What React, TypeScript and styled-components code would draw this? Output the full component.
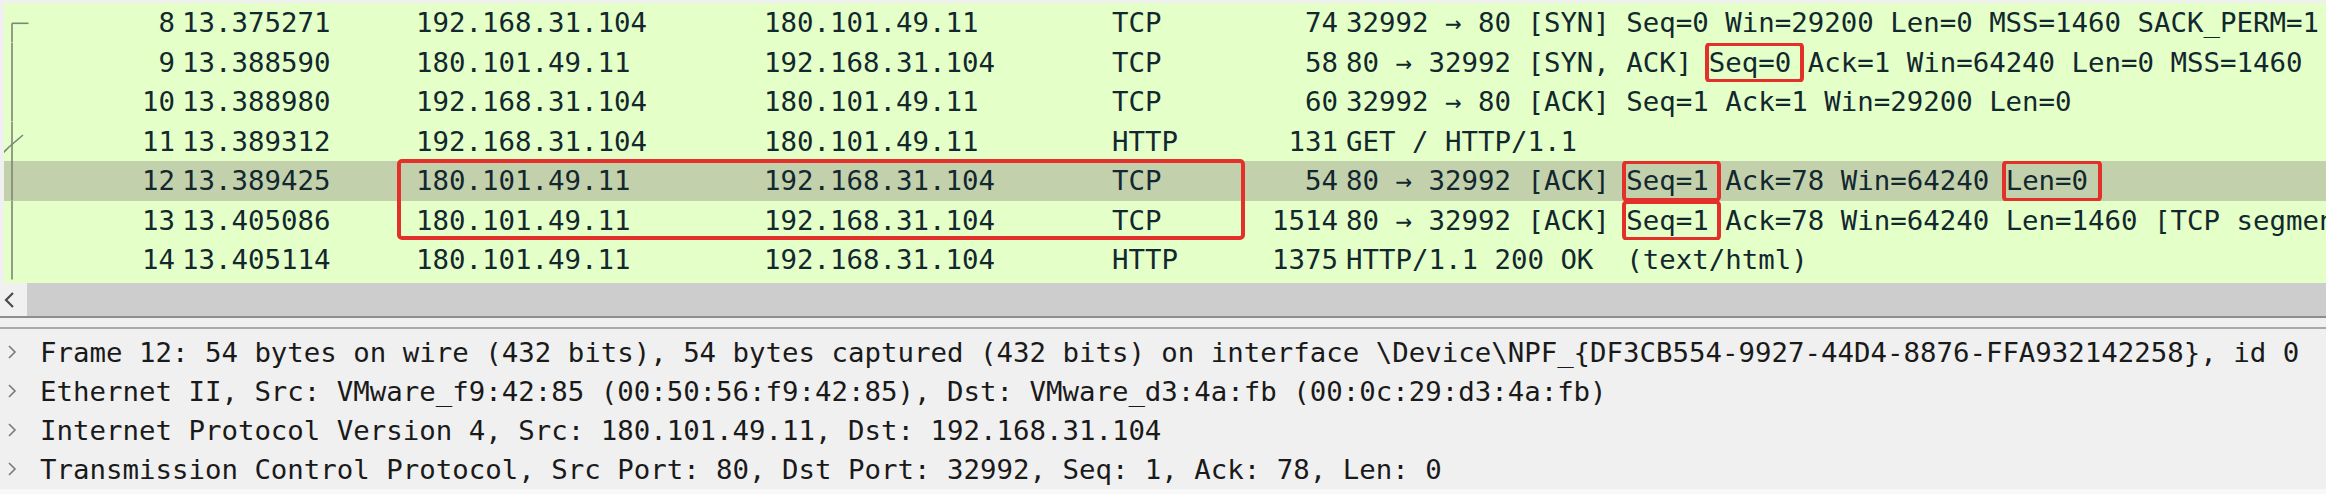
import React from 'react';
import styled, { createGlobalStyle } from 'styled-components';

const MONO = `"DejaVu Sans Mono", "Liberation Mono", monospace`;
const ROW_H = 39.5;

const Global = createGlobalStyle`
  html, body { margin: 0; padding: 0; background: #f0f0f0; }
  body { width: 2326px; height: 494px; overflow: hidden; font-family: ${MONO}; }
`;

const Page = styled.div`
  width: 2326px;
  height: 494px;
  display: flex;
  flex-direction: column;
  background: #f0f0f0;
  overflow: hidden;
`;

const PacketList = styled.div`
  position: relative;
  margin: 3px 0 0 4px;
  height: 280px;
  flex: none;
  background: #e4ffc7;
  overflow: hidden;
`;

const Row = styled.div<{ $selected?: boolean }>`
  display: grid;
  grid-template-columns: 36px 139px 233px 348px 348px 122px 112px 1fr;
  height: ${ROW_H}px;
  line-height: ${ROW_H}px;
  background: ${(p) => (p.$selected ? '#c2d1ac' : 'transparent')};
  color: #12272e;
  font-size: 27.4px;
  white-space: pre;
`;

const Cell = styled.div<{ $right?: boolean; $pl?: number }>`
  overflow: hidden;
  text-align: ${(p) => (p.$right ? 'right' : 'left')};
  padding: 0 ${(p) => (p.$right ? 4 : 0)}px 0 ${(p) => p.$pl ?? 4}px;
`;

const Gutter = styled.div`
  position: relative;
  height: ${ROW_H}px;
  svg { display: block; }
`;

const Mark = styled.span<{ $r?: number }>`
  position: relative;
  display: inline-block;
  &::after {
    content: '';
    position: absolute;
    top: -1px;
    bottom: -1px;
    left: -4px;
    right: ${(p) => -(p.$r ?? 13)}px;
    border: 4.5px solid #e3302b;
    border-radius: 5px;
  }
`;

const GroupBox = styled.div`
  position: absolute;
  left: 393px;
  top: ${4 * ROW_H - 2}px;
  width: 848px;
  height: ${2 * ROW_H + 2}px;
  border: 4.5px solid #e3302b;
  border-radius: 5px;
  box-sizing: border-box;
  pointer-events: none;
`;

const ScrollBar = styled.div`
  display: flex;
  height: 33px;
  flex: none;
`;

const ArrowButton = styled.div`
  width: 27px;
  background: #f0f0f0;
  display: flex;
  align-items: center;
  justify-content: flex-start;
  padding-left: 3px;
  box-sizing: border-box;
`;

const Track = styled.div`
  flex: 1;
  background: #cdcdcd;
`;

const Splitter = styled.div`
  height: 9px;
  flex: none;
  border-top: 2px solid #8e8e8e;
  border-bottom: 2px solid #a9a9a9;
  background: #f0f0f0;
`;

const Details = styled.div`
  flex: 1;
  background: #f0f0f0;
  padding-top: 3.5px;
  display: flex;
  flex-direction: column;
`;

const DetailRow = styled.div`
  display: flex;
  align-items: center;
  height: 39px;
  font-size: 27.4px;
  color: #1a1a1a;
  white-space: pre;
`;

const Expander = styled.div`
  width: 40px;
  flex: none;
  display: flex;
  align-items: center;
  padding-left: 7px;
  box-sizing: border-box;
`;

const BottomStrip = styled.div`
  margin-top: auto;
  height: 6px;
  background: #f8f8f8;
`;

type Kind = 'first' | 'line' | 'ack';

const Related: React.FC<{ kind: Kind }> = ({ kind }) => (
  <svg width="36" height={ROW_H} viewBox={`0 0 36 ${ROW_H}`}>
    {kind === 'first' ? (
      <>
        <line x1="8" y1="20.3" x2="8" y2={ROW_H} stroke="#7d8577" strokeWidth="1.6" />
        <line x1="8" y1="20.3" x2="24.5" y2="20.3" stroke="#7d8577" strokeWidth="1.6" />
      </>
    ) : (
      <line x1="8" y1="0" x2="8" y2={ROW_H} stroke="#7d8577" strokeWidth="1.6" />
    )}
    {kind === 'ack' && (
      <polyline points="-1,31 5,25 19,13" fill="none" stroke="#7d8577" strokeWidth="1.6" />
    )}
  </svg>
);

const Chevron = () => (
  <svg width="10" height="16" viewBox="0 0 10 16">
    <polyline points="2,2 8,8 2,14" fill="none" stroke="#7a7a7a" strokeWidth="1.6" />
  </svg>
);

const LeftArrow = () => (
  <svg width="12" height="18" viewBox="0 0 12 18">
    <polyline points="10,2 3,9 10,16" fill="none" stroke="#4a4a4a" strokeWidth="2.2" />
  </svg>
);

type Pkt = {
  no: number;
  time: string;
  src: string;
  dst: string;
  proto: string;
  len: number;
  info: React.ReactNode;
  kind: Kind;
  selected?: boolean;
};

const packets: Pkt[] = [
  { no: 8, time: '13.375271', src: '192.168.31.104', dst: '180.101.49.11', proto: 'TCP', len: 74, kind: 'first',
    info: '32992 → 80 [SYN] Seq=0 Win=29200 Len=0 MSS=1460 SACK_PERM=1' },
  { no: 9, time: '13.388590', src: '180.101.49.11', dst: '192.168.31.104', proto: 'TCP', len: 58, kind: 'line',
    info: <>80 → 32992 [SYN, ACK] <Mark>Seq=0</Mark> Ack=1 Win=64240 Len=0 MSS=1460</> },
  { no: 10, time: '13.388980', src: '192.168.31.104', dst: '180.101.49.11', proto: 'TCP', len: 60, kind: 'line',
    info: '32992 → 80 [ACK] Seq=1 Ack=1 Win=29200 Len=0' },
  { no: 11, time: '13.389312', src: '192.168.31.104', dst: '180.101.49.11', proto: 'HTTP', len: 131, kind: 'ack',
    info: 'GET / HTTP/1.1' },
  { no: 12, time: '13.389425', src: '180.101.49.11', dst: '192.168.31.104', proto: 'TCP', len: 54, kind: 'line', selected: true,
    info: <>80 → 32992 [ACK] <Mark $r={12}>Seq=1</Mark> Ack=78 Win=64240 <Mark $r={14}>Len=0</Mark></> },
  { no: 13, time: '13.405086', src: '180.101.49.11', dst: '192.168.31.104', proto: 'TCP', len: 1514, kind: 'line',
    info: <>80 → 32992 [ACK] <Mark $r={12}>Seq=1</Mark> Ack=78 Win=64240 Len=1460 [TCP segment of a reassembled PDU]</> },
  { no: 14, time: '13.405114', src: '180.101.49.11', dst: '192.168.31.104', proto: 'HTTP', len: 1375, kind: 'line',
    info: 'HTTP/1.1 200 OK  (text/html)' },
];

const details = [
  'Frame 12: 54 bytes on wire (432 bits), 54 bytes captured (432 bits) on interface \\Device\\NPF_{DF3CB554-9927-44D4-8876-FFA932142258}, id 0',
  'Ethernet II, Src: VMware_f9:42:85 (00:50:56:f9:42:85), Dst: VMware_d3:4a:fb (00:0c:29:d3:4a:fb)',
  'Internet Protocol Version 4, Src: 180.101.49.11, Dst: 192.168.31.104',
  'Transmission Control Protocol, Src Port: 80, Dst Port: 32992, Seq: 1, Ack: 78, Len: 0',
];

export default function App() {
  return (
    <Page>
      <Global />
      <PacketList>
        {packets.map((p) => (
          <Row key={p.no} $selected={p.selected}>
            <Gutter>
              <Related kind={p.kind} />
            </Gutter>
            <Cell $right>{p.no}</Cell>
            <Cell $pl={3}>{p.time}</Cell>
            <Cell>{p.src}</Cell>
            <Cell>{p.dst}</Cell>
            <Cell>{p.proto}</Cell>
            <Cell $right>{p.len}</Cell>
            <Cell>{p.info}</Cell>
          </Row>
        ))}
        <GroupBox />
      </PacketList>
      <ScrollBar>
        <ArrowButton>
          <LeftArrow />
        </ArrowButton>
        <Track />
      </ScrollBar>
      <Splitter />
      <Details>
        {details.map((d) => (
          <DetailRow key={d}>
            <Expander>
              <Chevron />
            </Expander>
            {d}
          </DetailRow>
        ))}
        <BottomStrip />
      </Details>
    </Page>
  );
}
